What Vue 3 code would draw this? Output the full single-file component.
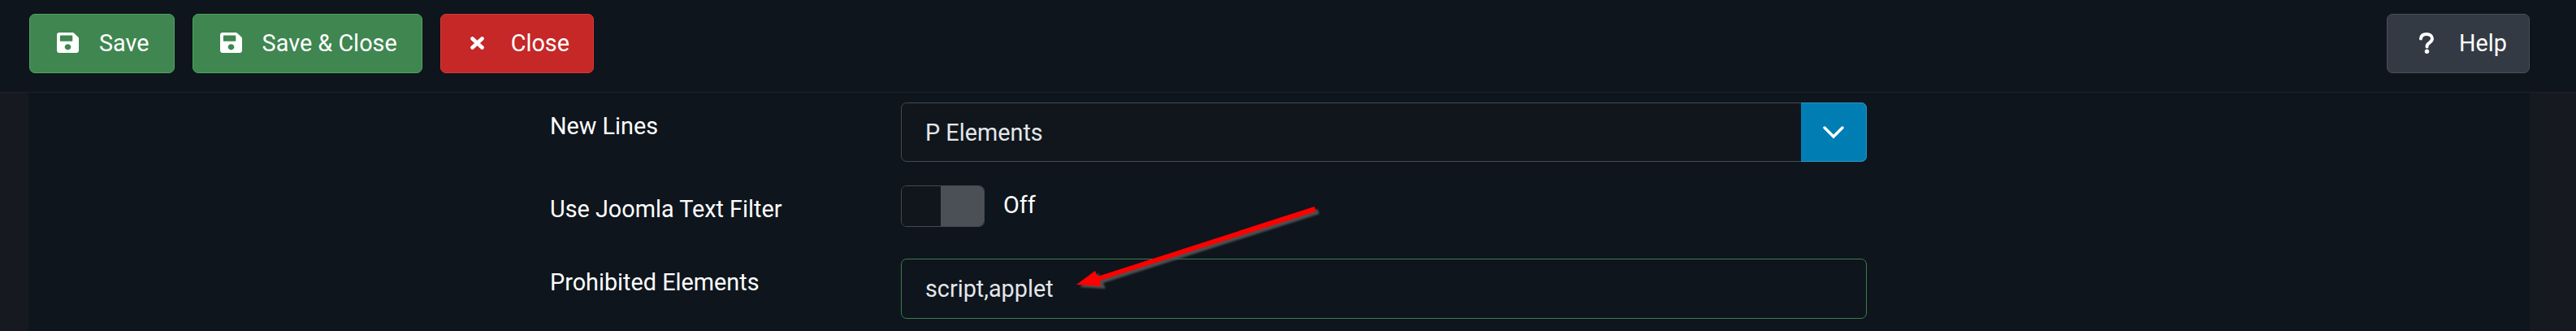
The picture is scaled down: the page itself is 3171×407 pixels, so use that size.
<template>
  <div class="page">
    <!-- barra de ações -->
    <div class="toolbar">
      <button class="btn btn-green">
        <svg class="ico-save" viewBox="0 32 448 448" preserveAspectRatio="none"><path :d="savePath" /></svg>
        <span>Save</span>
      </button>
      <button class="btn btn-green">
        <svg class="ico-save" viewBox="0 32 448 448" preserveAspectRatio="none"><path :d="savePath" /></svg>
        <span>Save &amp; Close</span>
      </button>
      <button class="btn btn-red">
        <svg class="ico-close" viewBox="0 0 17 16"><path d="M2.5 2.5 L14.5 13.5 M14.5 2.5 L2.5 13.5" /></svg>
        <span>Close</span>
      </button>
      <button class="btn btn-help">
        <svg class="ico-help" viewBox="0 0 18 26">
          <path d="M2 7.5 C2.4 3.8 5.2 2 9 2 C13 2 16 4.2 16 7.6 C16 11.2 12.6 12.2 10.8 14 C9.8 15 9.5 16 9.5 17.6" />
          <circle cx="9.5" cy="23.2" r="2.7" />
        </svg>
        <span>Help</span>
      </button>
    </div>

    <div class="content">
      <div class="form">
        <div class="row row-select">
          <label class="label">New Lines</label>
          <div class="select">
            <span class="value">P Elements</span>
            <span class="select-arrow">
              <svg viewBox="0 0 26 16"><path d="M2 2 L13 13 L24 2" /></svg>
            </span>
          </div>
        </div>

        <div class="row row-toggle">
          <label class="label">Use Joomla Text Filter</label>
          <div class="toggle-wrap">
            <div class="toggle"><span class="toggle-off"></span><span class="toggle-knob"></span></div>
            <span class="toggle-text">Off</span>
          </div>
        </div>

        <div class="row">
          <label class="label">Prohibited Elements</label>
          <div class="input"><span class="value">script,applet</span></div>
        </div>
      </div>

      <!-- seta de anotação por cima do formulário -->
      <svg class="annotation" width="320" height="110" viewBox="1310 250 320 110">
        <path class="arrow-shadow" d="M1329 353 L1352 336 L1355 343 L1622 257 L1624 263 L1358 348 L1361 355 Z" />
        <path class="arrow-red" d="M1325 350 L1348 333 L1351 340 L1618 254 L1620 260 L1354 345 L1355 352 Z" />
      </svg>
    </div>
  </div>
</template>

<script setup>
const savePath =
  "M433.941 129.941l-83.882-83.882A48 48 0 0 0 316.118 32H48C21.49 32 0 53.49 0 80v352c0 26.51 21.49 48 48 48h352c26.51 0 48-21.49 48-48V163.882a48 48 0 0 0-14.059-33.941zM224 416c-35.346 0-64-28.654-64-64 0-35.346 28.654-64 64-64s64 28.654 64 64c0 35.346-28.654 64-64 64zm96-304.52V212c0 6.627-5.373 12-12 12H76c-6.627 0-12-5.373-12-12V108c0-6.627 5.373-12 12-12h228.52c3.183 0 6.235 1.264 8.485 3.515l3.48 3.48A11.996 11.996 0 0 1 320 111.48z";
</script>

<style>
html,
body {
  margin: 0;
  background: #0e151d;
}
</style>

<style scoped>
.page {
  width: 3171px;
  height: 407px;
  overflow: hidden;
  background: #16191f;
  font-family: Roboto, "Liberation Sans", sans-serif;
  font-size: 28.8px;
  line-height: 42px;
  color: #fff;
}

.toolbar {
  display: flex;
  gap: 22px;
  box-sizing: border-box;
  height: 114px;
  padding: 17px 57px 0 36px;
  background: #0e151d;
  border-bottom: 1px solid #1a222c;
}

.btn {
  display: flex;
  align-items: center;
  box-sizing: border-box;
  height: 73px;
  padding: 0 30px 2px 33px;
  border: 1px solid;
  border-radius: 7px;
  font: inherit;
  color: #fff;
}
.btn-green {
  background: #3f8650;
  border-color: #4da560;
}
.btn-red {
  background: #c52827;
  border-color: #d5383a;
  padding-left: 36px;
  padding-right: 29px;
}
.btn-help {
  margin-left: auto;
  background: #343a43;
  border-color: #4a4f57;
  padding-left: 39px;
  padding-right: 27px;
}
.btn svg {
  fill: #fff;
  flex: none;
}

.ico-save {
  width: 27px;
  height: 25px;
  margin-right: 25px;
}
.ico-close {
  width: 17px;
  height: 16px;
  margin-right: 33px;
}
.ico-close path {
  fill: none;
  stroke: #fff;
  stroke-width: 4.6;
  stroke-linecap: round;
}
.ico-help {
  width: 18px;
  height: 26px;
  margin-right: 31px;
}
.ico-help path {
  fill: none;
  stroke: #fff;
  stroke-width: 4;
  stroke-linecap: round;
}

.content {
  position: relative;
  height: 293px;
  margin: 0 57px 0 35px;
  background: #0e151d;
  padding-top: 12px;
  box-sizing: border-box;
}

.form {
  margin-left: 642px;
  width: 1621px;
}

.row {
  display: grid;
  grid-template-columns: 432px 1189px;
  align-items: start;
}
.row-select {
  margin-bottom: 29px;
}
.row-toggle {
  margin-bottom: 39px;
}

.label {
  padding-top: 8px;
}

.select,
.input {
  display: flex;
  align-items: center;
  box-sizing: border-box;
  padding-left: 29px;
  border-radius: 7px;
  color: #e3e7ea;
}
.select {
  height: 73px;
  border: 1px solid #454a50;
  background: #10161c;
  position: relative;
}
.input {
  height: 74px;
  border: 1px solid #3c7c4a;
  background: #0e151d;
}

.select-arrow {
  display: flex;
  align-items: center;
  justify-content: center;
  position: absolute;
  right: -1px;
  top: -1px;
  width: 81px;
  height: 73px;
  background: #007eb4;
  border: 1px solid #2b93c2;
  border-left: none;
  border-radius: 0 7px 7px 0;
  box-sizing: border-box;
}
.select-arrow svg {
  width: 26px;
  height: 16px;
}
.select-arrow path {
  fill: none;
  stroke: #fff;
  stroke-width: 3.4;
  stroke-linecap: round;
}

.toggle-wrap {
  display: flex;
  align-items: center;
  gap: 23px;
}
.toggle {
  display: flex;
  box-sizing: border-box;
  width: 103px;
  height: 51px;
  border: 1px solid #454a50;
  border-radius: 7px;
  overflow: hidden;
}
.toggle-off {
  flex: 1;
  background: #10161c;
}
.toggle-knob {
  width: 53px;
  background: #4b5057;
}
.toggle-text {
  position: relative;
  top: -2px;
}

.annotation {
  position: absolute;
  left: 1275px;
  top: 136px;
}
.arrow-shadow {
  fill: #4f4f4f;
  filter: blur(1px);
}
.arrow-red {
  fill: #ff0000;
}
</style>
